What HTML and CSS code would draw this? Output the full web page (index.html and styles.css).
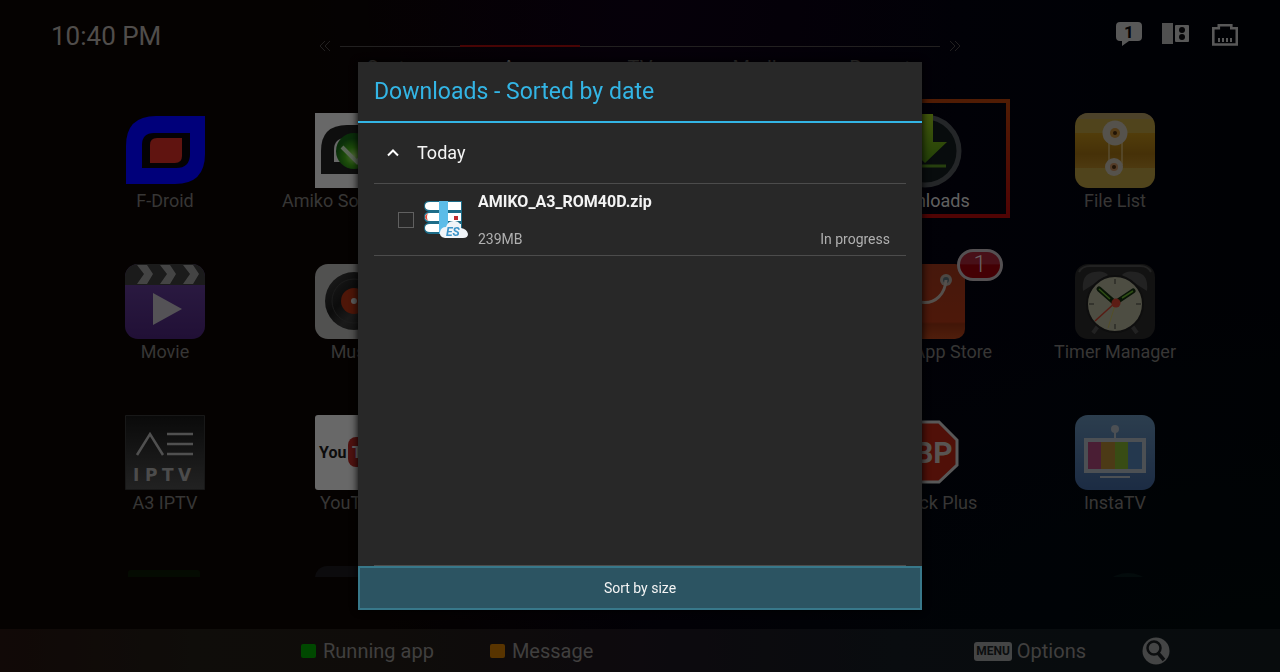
FILE: index.html
```html
<!DOCTYPE html>
<html lang="en">

<head>
    <meta charset="UTF-8">
    <meta name="viewport" content="width=device-width, initial-scale=1.0">
    <title>Downloads</title>
    <link rel="stylesheet" href="styles.css">
</head>

<body>
    <div class="launcher">
        <header class="topbar">
            <time class="clock">10:40 PM</time>
            <nav class="tabs">
                <svg class="arrow" viewBox="0 0 12 12"><path d="M6 1L1 6l5 5M11 1L6 6l5 5" /></svg>
                <ul class="tab-list">
                    <li><a href="#">System</a></li>
                    <li class="active"><a href="#">App</a></li>
                    <li><a href="#">TV</a></li>
                    <li><a href="#">Media</a></li>
                    <li><a href="#">Recent</a></li>
                </ul>
                <svg class="arrow" viewBox="0 0 12 12"><path d="M1 1l5 5-5 5M6 1l5 5-5 5" /></svg>
            </nav>
            <div class="status">
                <svg width="28" height="28" viewBox="0 0 28 28">
                    <path fill="#b0b0b0" d="M6 2h18a4 4 0 0 1 4 4v11a4 4 0 0 1-4 4H15l-7 5v-5H6a4 4 0 0 1-4-4V6a4 4 0 0 1 4-4z" />
                    <text x="10" y="18" font-size="17" font-weight="bold" fill="#08080c">1</text>
                </svg>
                <svg width="28" height="28" viewBox="0 0 28 28">
                    <path fill="#a0a0a0" d="M0 3h11v21H0z" />
                    <rect x="13" y="5" width="14" height="17" rx="1" fill="#b0b0b0" />
                    <circle cx="20" cy="10" r="3" fill="#08080c" />
                    <circle cx="20" cy="17" r="3" fill="#08080c" />
                </svg>
                <svg width="28" height="28" viewBox="0 0 28 28">
                    <path fill="none" stroke="#b0b0b0" stroke-width="2.6" d="M3.300 24.500V8.200h5.500V5.200h12.500v3h5.500v16.300z" />
                    <path stroke="#b0b0b0" stroke-width="2" d="M9 18v4M13 18v4M17 18v4M21 18v4" />
                </svg>
            </div>
        </header>

        <main class="apps">
            <a href="#" class="tile col1">
                <svg class="icon" viewBox="0 0 80 75">
                    <path fill="#0000f4" d="M1 71V33Q1 3 31 3h49v38q0 30-30 30z" />
                    <path fill="#080408" d="M17 55V32q0-12 12-12h36v21q0 14-14 14z" />
                    <path fill="#c02820" d="M25 50V32q0-7 7-7h25v18q0 7-7 7z" />
                </svg>
                <span>F-Droid</span>
            </a>
            <a href="#" class="tile col2">
                <svg class="icon" viewBox="0 0 80 75">
                    <defs>
                        <radialGradient id="ball" cx=".5" cy=".65">
                            <stop offset="0" stop-color="#9fd86a" />
                            <stop offset=".5" stop-color="#3a9a14" />
                            <stop offset="1" stop-color="#145c14" />
                        </radialGradient>
                    </defs>
                    <path fill="#d0d0d0" d="M0 0h80v75H0z" />
                    <path fill="#1c1c1c" d="M6 61V38q0-26 26-26h42v49z" />
                    <path fill="#d0d0d0" d="M19 49V37q0-12 12-12h30v24z" />
                    <circle cx="39" cy="38" r="18" fill="url(#ball)" />
                    <path fill="none" stroke="#b4ccac" stroke-width="4" d="M27 34l15 15 12-15" />
                </svg>
                <span>Amiko Soft Center</span>
            </a>
            <a href="#" class="tile col5 selected">
                <svg class="icon" viewBox="0 0 80 75">
                    <defs>
                        <linearGradient id="arrow" x2="0" y2="1">
                            <stop offset="0" stop-color="#86b018" />
                            <stop offset="1" stop-color="#458010" />
                        </linearGradient>
                    </defs>
                    <circle cx="40" cy="38" r="34" fill="#10181a" stroke="#484c50" stroke-width="5" />
                    <path stroke="#4c7e1c" stroke-width="3" d="M21 53h40" />
                    <path fill="url(#arrow)" d="M31 1h17v28h14L40 50 18 29h13z" />
                </svg>
                <span>Downloads</span>
            </a>
            <a href="#" class="tile col6">
                <svg class="icon" viewBox="0 0 80 75">
                    <defs>
                        <clipPath id="round"><rect width="80" height="75" rx="13" /></clipPath>
                        <linearGradient id="gold" x2="0" y2="1">
                            <stop offset="0" stop-color="#a37a16" />
                            <stop offset=".6" stop-color="#8c6210" />
                            <stop offset="1" stop-color="#9c7420" />
                        </linearGradient>
                    </defs>
                    <g clip-path="url(#round)">
                        <path fill="#a08838" d="M0 0h80v75H0z" />
                        <path fill="url(#gold)" d="M0 20h80v35H0z" />
                        <path fill="#948468" opacity=".6" d="M0 0h80v6H0z" />
                        <path stroke="#c4b488" d="M34 24v28M47 24v28" />
                        <circle cx="40" cy="20" r="12.500" fill="#aaa498" />
                        <circle cx="39" cy="54" r="9" fill="#aaa498" />
                        <circle cx="40" cy="20" r="5" fill="#a87830" />
                        <circle cx="39" cy="54" r="4" fill="#a87850" />
                        <circle cx="40" cy="20" r="2" fill="#40280c" />
                        <circle cx="39" cy="54" r="2" fill="#40280c" />
                    </g>
                </svg>
                <span>File List</span>
            </a>

            <a href="#" class="tile col1">
                <svg class="icon" viewBox="0 0 80 75">
                    <defs>
                        <linearGradient id="violet" x2="0" y2="1">
                            <stop offset="0" stop-color="#5b3a88" />
                            <stop offset="1" stop-color="#42206c" />
                        </linearGradient>
                    </defs>
                    <g clip-path="url(#round)">
                        <path fill="url(#violet)" d="M0 0h80v75H0z" />
                        <path fill="#363636" d="M0 0h80v21H0z" />
                        <path fill="#888" d="M12 1h10l6 9-6 10H12l7-10zM35 1h10l6 9-6 10H35l7-10zM58 1h10l6 9-6 10H58l7-10z" />
                    </g>
                    <path fill="#a8a4ac" d="M28 29l29 16-29 16z" />
                </svg>
                <span>Movie</span>
            </a>
            <a href="#" class="tile col2">
                <svg class="icon" viewBox="0 0 80 75">
                    <defs>
                        <linearGradient id="vinyl" x2="1" y2="1">
                            <stop offset="0" stop-color="#3c3c3c" />
                            <stop offset=".4" stop-color="#181818" />
                            <stop offset=".6" stop-color="#343434" />
                            <stop offset="1" stop-color="#141414" />
                        </linearGradient>
                    </defs>
                    <rect width="80" height="75" rx="13" fill="#a2a2a0" />
                    <circle cx="39" cy="37" r="29" fill="url(#vinyl)" />
                    <circle cx="39" cy="37" r="22" fill="none" stroke="#383838" />
                    <circle cx="39" cy="37" r="13" fill="#9c2c10" />
                    <circle cx="39" cy="37" r="3" fill="#bbb" />
                </svg>
                <span>Music</span>
            </a>
            <a href="#" class="tile col5">
                <svg class="icon" viewBox="0 0 80 75">
                    <defs>
                        <linearGradient id="bag" x2="0" y2="1">
                            <stop offset="0" stop-color="#8c3018" />
                            <stop offset=".77" stop-color="#9a3014" />
                            <stop offset=".8" stop-color="#842c10" />
                            <stop offset="1" stop-color="#a03c18" />
                        </linearGradient>
                    </defs>
                    <rect width="80" height="75" rx="10" fill="url(#bag)" />
                    <circle cx="61" cy="16" r="6" fill="#989088" />
                    <circle cx="61" cy="16" r="3" fill="#506068" />
                    <path fill="none" stroke="#aaa098" stroke-width="3" d="M61 16c-2 30-40 30-42 0" />
                </svg>
                <span>Amiko App Store</span>
                <b class="badge">1</b>
            </a>
            <a href="#" class="tile col6">
                <svg class="icon" viewBox="0 0 80 75">
                    <rect width="80" height="75" rx="13" fill="#242424" />
                    <path fill="none" stroke="#444" stroke-width="2" d="M4 8q3-6 11-6h50q8 0 11 6" />
                    <path fill="#444" d="M8 27Q6 10 19 8q10-2 14 3zM72 27Q74 10 61 8q-10-2-14 3z" />
                    <path stroke="#444" stroke-width="4" d="M23 62l-5 7M57 62l5 7" />
                    <circle cx="40" cy="40" r="28" fill="#9a9a84" stroke="#1c1c1c" stroke-width="2" />
                    <path stroke="#383830" d="M40 15v5M40 60v5M14 40h5M61 40h5" />
                    <path stroke="#10280c" stroke-width="5" stroke-linecap="round" d="M40 39L24 25M40 39l18-12" />
                    <path stroke="#5c9c28" stroke-width="1.500" d="M35 35L24 25M47 34l11-7" />
                    <path stroke="#a8a050" d="M41 38l-8 26" />
                    <path stroke="#b03828" stroke-width="1.500" d="M41 38L20 57" />
                    <circle cx="41" cy="39" r="4.500" fill="#b83828" />
                </svg>
                <span>Timer Manager</span>
            </a>

            <a href="#" class="tile col1">
                <svg class="icon" viewBox="0 0 80 75">
                    <defs>
                        <linearGradient id="slate" x2="0" y2="1">
                            <stop offset="0" stop-color="#141414" />
                            <stop offset="1" stop-color="#444" />
                        </linearGradient>
                    </defs>
                    <path fill="url(#slate)" stroke="#303030" d="M.5.5h79v74H.5z" />
                    <path fill="none" stroke="#a0a0a0" stroke-width="2.500" d="M12 40l13-21 13 21M42 19h26M42 29h26M42 39h26" />
                    <text class="iptv" x="8 20 37 53" y="66">IPTV</text>
                </svg>
                <span>A3 IPTV</span>
            </a>
            <a href="#" class="tile col2">
                <svg class="icon" viewBox="0 0 80 75">
                    <rect width="80" height="75" rx="3" fill="#d0d0d0" />
                    <rect x="33" y="22" width="44" height="30" rx="8" fill="#a02420" />
                    <text x="4" y="43" class="yt" fill="#181818">You</text>
                    <text x="37" y="43" class="yt" fill="#d0d0d0">Tube</text>
                </svg>
                <span>YouTube</span>
            </a>
            <a href="#" class="tile col5">
                <svg class="icon" viewBox="0 0 80 75">
                    <path fill="#a02010" stroke="#b0b0b0" stroke-width="3" d="M27 7h27l18 18v25L54 67H27L8 50V25z" />
                    <text x="9" y="48" font-size="30" font-weight="bold" fill="#b0a8a4">ABP</text>
                </svg>
                <span>Adblock Plus</span>
            </a>
            <a href="#" class="tile col6">
                <svg class="icon" viewBox="0 0 80 75">
                    <defs>
                        <linearGradient id="sky" x2="0" y2="1">
                            <stop offset="0" stop-color="#587c9c" />
                            <stop offset="1" stop-color="#385888" />
                        </linearGradient>
                    </defs>
                    <rect width="80" height="75" rx="13" fill="url(#sky)" />
                    <circle cx="40" cy="14" r="4" fill="#98a0a8" />
                    <path stroke="#98a0a8" stroke-width="2" d="M40 14v9" />
                    <path fill="#98a0a8" d="M9 23h62v35H9z" />
                    <path fill="#943c68" d="M13 27h13v27H13z" />
                    <path fill="#98742c" d="M26 27h14v27H26z" />
                    <path fill="#709828" d="M40 27h13v27H40z" />
                    <path fill="#48709c" d="M53 27h14v27H53z" />
                    <path fill="#98a0a8" d="M25 61h30v2H25z" />
                </svg>
                <span>InstaTV</span>
            </a>

            <a href="#" class="tile col1">
                <svg class="icon faded" viewBox="0 0 80 75"><rect x="3" y="4" width="72" height="70" rx="3" fill="#0c2408" /></svg>
            </a>
            <a href="#" class="tile col2">
                <svg class="icon faded" viewBox="0 0 80 75"><rect width="80" height="75" rx="12" fill="#22222a" /></svg>
            </a>
            <a href="#" class="tile col6">
                <svg class="icon faded" viewBox="0 0 80 75"><circle cx="53" cy="37" r="30" fill="#0c2020" /></svg>
            </a>
        </main>

        <footer class="bottombar">
            <div class="keys">
                <button><i class="key green"></i>Running app</button>
                <button><i class="key orange"></i>Message</button>
            </div>
            <div class="keys">
                <button><b class="menu">MENU</b>Options</button>
                <button aria-label="Search">
                    <svg width="28" height="28" viewBox="0 0 28 28">
                        <circle cx="14" cy="14" r="13.500" fill="#888a8a" />
                        <circle cx="12" cy="11" r="6.500" fill="none" stroke="#181c1e" stroke-width="2.500" />
                        <path stroke="#181c1e" stroke-width="3.500" d="M16 16l6 7" />
                    </svg>
                </button>
            </div>
        </footer>
    </div>

    <div class="backdrop">
        <section class="dialog" role="dialog" aria-labelledby="title">
            <h1 id="title">Downloads - Sorted by date</h1>
            <div class="list">
                <h2 class="group">
                    <svg width="12" height="8" viewBox="0 0 12 8"><path d="M1 6.500l5-5 5 5" /></svg>
                    Today
                </h2>
                <div class="download">
                    <input type="checkbox" id="file">
                    <svg width="44" height="40" viewBox="0 0 44 40">
                        <path fill="#1c6c88" d="M5 1h33v11H5Q0 11 0 6t5-5zM5 12h33v11H5Q0 22 0 17t5-5zM5 23h33v11H5Q0 33 0 28t5-5z" />
                        <path fill="#fff" d="M6 2h31v8H6Q1 10 1 6t5-4zM6 13h31v8H6Q1 21 1 17t5-4zM6 24h31v8H6Q1 32 1 28t5-4z" />
                        <path fill="#e04c38" d="M4 13q-6 4 0 8-2-4 0-8z" />
                        <path fill="#5cbce8" d="M15 1h9v33h-9z" />
                        <path fill="#c02c30" d="M30 16h4v4h-4z" />
                        <path fill="#f0f4f8" d="M21 38q-6-1-5-6 1-5 6-5 2-7 9-6 6 1 6 7 6 1 7 6 0 4-5 4z" />
                        <text x="22" y="36" font-size="12" font-weight="bold" font-style="italic" fill="#3c94c8">ES</text>
                    </svg>
                    <div class="info">
                        <label for="file">AMIKO_A3_ROM40D.zip</label>
                        <p><span>239MB</span><span>In progress</span></p>
                    </div>
                </div>
            </div>
            <button class="sort">Sort by size</button>
        </section>
    </div>
</body>

</html>
```

FILE: styles.css
```css
* {
    box-sizing: border-box;
}

body {
    margin: 0;
    font-family: Roboto, "Liberation Sans", sans-serif;
    background-color: #040204;
}

h1,
h2,
p,
ul {
    margin: 0;
    padding: 0;
    font-weight: normal;
    list-style: none;
}

a {
    color: inherit;
    text-decoration: none;
}

button {
    border: none;
    padding: 0;
    background: none;
    font: inherit;
    color: inherit;
}

.launcher {
    display: flex;
    flex-direction: column;
    height: 100vh;
    overflow: hidden;
    color: #6e6c6a;
    background:
        radial-gradient(ellipse at 50% 0, rgba(18, 0, 26, .5), transparent 40%),
        radial-gradient(ellipse at 100% 100%, rgba(0, 12, 12, .7), transparent 45%),
        linear-gradient(90deg, #0a0502, #0a0402 30%, #06000c 50%, #02020e 75%, #000208);
}

/* top bar */
.topbar {
    display: grid;
    grid-template-columns: 1fr auto 1fr;
    height: 99px;
    padding: 0 42px;
}

.clock {
    padding: 20px 9px;
    font-size: 26px;
    line-height: 33px;
    color: #a09a96;
}

.tabs {
    display: flex;
    gap: 9px;
    padding-top: 46px;
}

.arrow {
    width: 12px;
    height: 12px;
    margin-top: -6px;
    fill: none;
    stroke: #444040;
}

.tab-list {
    display: grid;
    grid-template-columns: repeat(5, 1fr);
    width: 600px;
    border-top: 1px solid #444040;
    font-size: 20px;
    line-height: 24px;
    text-align: center;
}

.tab-list li {
    padding-top: 9px;
}

.tab-list .active {
    color: #d0d0d0;
    box-shadow: 0 -2px #900808;
}

.status {
    display: flex;
    justify-content: flex-end;
    gap: 20px;
    padding-top: 20px;
}

/* app grid */
.apps {
    flex: 1;
    display: grid;
    grid-template-columns: repeat(6, 1fr);
    grid-auto-rows: 119px;
    row-gap: 32px;
    justify-items: center;
    margin: 0 70px 52px;
    overflow: hidden;
}

.col1 {
    grid-column: 1;
}

.col2 {
    grid-column: 2;
}

.col5 {
    grid-column: 5;
}

.col6 {
    grid-column: 6;
}

.tile {
    position: relative;
    display: flex;
    flex-direction: column;
    align-items: center;
    width: 170px;
    border: 4px solid transparent;
    padding-top: 10px;
    font-size: 18px;
    line-height: 26px;
}

.selected {
    border-image: linear-gradient(#a03808, #a00808) 1;
    color: #c0c0c0;
}

.icon {
    width: 80px;
    height: 75px;
}

.faded {
    opacity: .6;
}

.yt {
    font-size: 16px;
    font-weight: bold;
}

.iptv {
    font: bold 17px "DejaVu Sans", sans-serif;
    fill: #989898;
}

.badge {
    position: absolute;
    top: -5px;
    right: 3px;
    width: 46px;
    height: 32px;
    border: 3px solid #a8a0a4;
    border-radius: 16px;
    background: linear-gradient(#902030 45%, #880008 50%);
    color: #d0c0c4;
    font-size: 23px;
    font-weight: 300;
    line-height: 26px;
    text-align: center;
}

/* bottom bar */
.bottombar {
    display: flex;
    justify-content: space-between;
    height: 43px;
    padding: 1px 110px 0 301px;
    background: linear-gradient(90deg, #22120e, #1e1a14 15%, #1e1914 30%, #1a141c 50%, #12181e 70%, #10191b);
    font-size: 20px;
    color: #807e7c;
}

.keys {
    display: flex;
    gap: 56px;
}

.keys button {
    display: flex;
    align-items: center;
}

.key {
    width: 15px;
    height: 14px;
    margin-right: 7px;
    border-radius: 2px;
}

.green {
    background-color: #009000;
}

.orange {
    background-color: #b06800;
}

.menu {
    margin-right: 5px;
    border-radius: 3px;
    padding: 0 2px;
    background-color: #888a8a;
    color: #181c1e;
    font-size: 12px;
    line-height: 19px;
}

/* downloads dialog */
.backdrop {
    position: fixed;
    inset: 0;
    display: flex;
    justify-content: center;
    align-items: center;
    background-color: rgba(0, 0, 0, .5);
}

.dialog {
    display: flex;
    flex-direction: column;
    width: 564px;
    max-width: 100%;
    height: calc(100vh - 124px);
    background-color: #282828;
    box-shadow: 0 0 8px #000;
    color: #f4f4f4;
}

.dialog h1 {
    border-bottom: 2px solid #33b5e5;
    padding: 1px 16px 0;
    font-size: 23px;
    line-height: 58px;
    color: #33b5e5;
}

.list {
    flex: 1;
    margin: 0 16px;
    border-bottom: 1px solid #4c4c4c;
}

.group {
    display: flex;
    align-items: center;
    gap: 18px;
    border-bottom: 1px solid #4c4c4c;
    padding-left: 13px;
    font-size: 18px;
    line-height: 60px;
}

.group path {
    fill: none;
    stroke: #fff;
    stroke-width: 2;
}

.download {
    display: flex;
    align-items: center;
    border-bottom: 1px solid #4c4c4c;
    padding: 6px 16px 6px 24px;
}

.download input {
    appearance: none;
    width: 16px;
    height: 16px;
    margin: 0 10px 0 0;
    border: 1px solid #606060;
}

.info {
    flex: 1;
    margin-left: 10px;
    font-size: 14px;
}

.info label {
    display: block;
    font-size: 16px;
    font-weight: bold;
    line-height: 24px;
}

.info p {
    display: flex;
    justify-content: space-between;
    padding-top: 15px;
    line-height: 20px;
    color: #b0b0b0;
}

.sort {
    border: 2px solid #38788a;
    background-color: #2c5462;
    font-size: 14px;
    line-height: 40px;
}
```
